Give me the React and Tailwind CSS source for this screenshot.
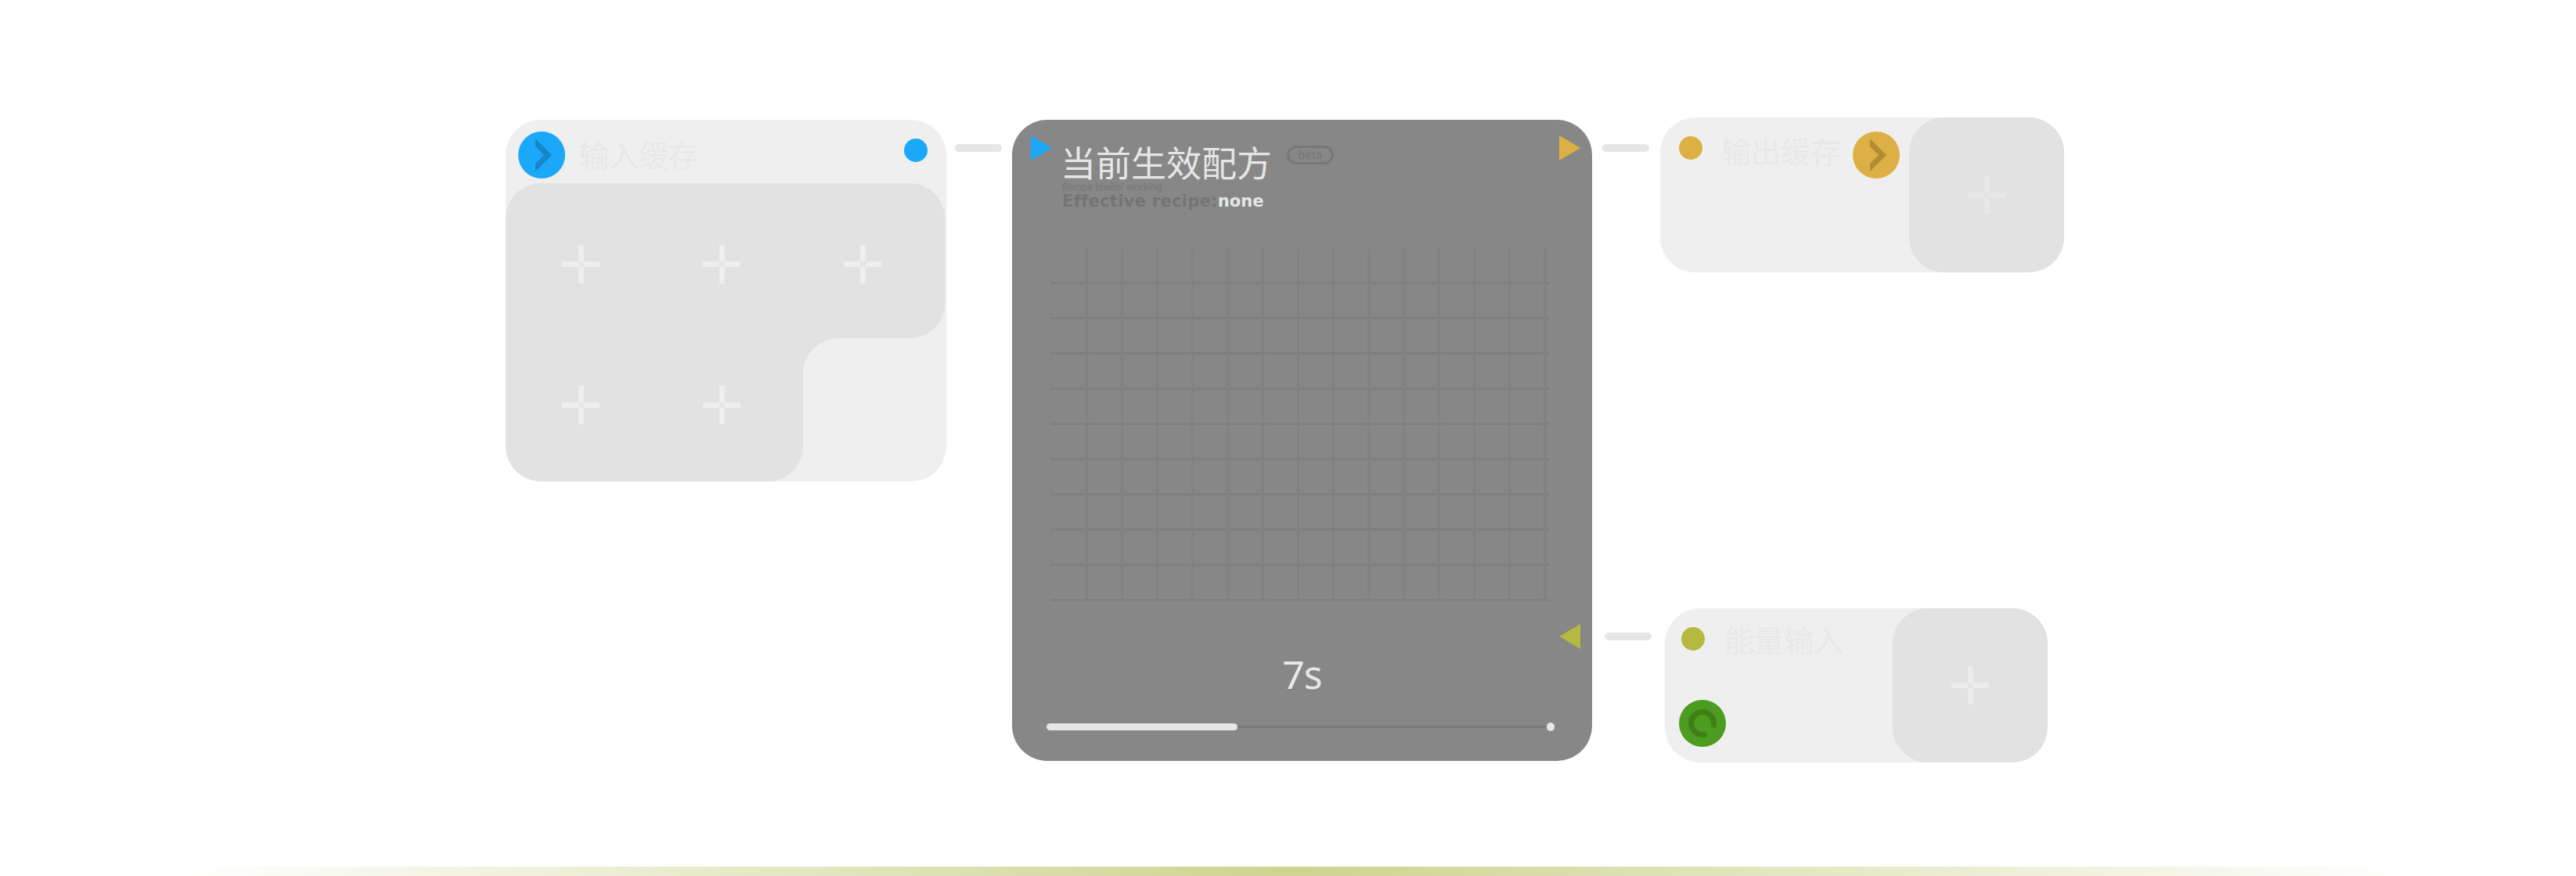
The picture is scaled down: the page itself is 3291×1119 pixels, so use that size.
import React from "react";

const cjk = { fontFamily: '"Noto Sans CJK SC", "Noto Sans", sans-serif' };

function Plus({ arm = "#eeeeee", mid = "#e6e6e6" }) {
  return (
    <svg width="48" height="49" viewBox="0 0 48 49" className="block">
      <rect x="21" y="0" width="7" height="49" fill={arm} />
      <rect x="0" y="21" width="48" height="7" fill={arm} />
      <rect x="21" y="21" width="7" height="7" fill={mid} />
    </svg>
  );
}

function Chevron({ bg }) {
  return (
    <svg width="60" height="60" viewBox="0 0 60 60" className="block shrink-0">
      <circle cx="30" cy="30" r="30" fill={bg} />
      <polygon points="22,9 43,30 22,51 22,41 33,30 22,19" fill="#000" fillOpacity="0.2" />
    </svg>
  );
}

function Spinner() {
  return (
    <svg width="60" height="60" viewBox="0 0 60 60" className="block shrink-0">
      <circle cx="30" cy="30" r="30" fill="#4c9c1f" />
      <path d="M43.6 35 A14.5 14.5 0 1 0 35 43.6" fill="none" stroke="#3e7f18" strokeWidth="7" />
    </svg>
  );
}

function Triangle({ color, left }) {
  return (
    <svg width="27" height="32" viewBox="0 0 27 32" className="block">
      <polygon points={left ? "27,0 0,16 27,32" : "0,0 27,16 0,32"} fill={color} />
    </svg>
  );
}

function Cell({ className }) {
  return (
    <div className={`w-[180px] flex items-center justify-center ${className}`}>
      <Plus />
    </div>
  );
}

function Connector({ className }) {
  return <div className={`w-[60px] h-[10px] rounded-[5px] bg-[#e6e6e6] shrink-0 ${className}`} />;
}

const Title = ({ children, className }) => (
  <div style={cjk} className={`text-[38px] leading-none text-[#e8e8e8] whitespace-nowrap ${className}`}>
    {children}
  </div>
);

function RecipeGrid() {
  const rows = Array.from({ length: 10 });
  const cols = Array.from({ length: 14 });
  return (
    <div className="w-[639px] border-t-2 border-l-2 border-[#848484]">
      {rows.map((_, r) => (
        <div key={r} className="flex pl-[2px] h-[45px] border-b-[3px] border-[#7f7f7f] box-border">
          {cols.map((_, c) => (
            <div key={c} className="w-[45px] h-[45px] border-r-[3px] border-[#818181] box-border shrink-0" />
          ))}
        </div>
      ))}
    </div>
  );
}

export default function App() {
  return (
    <div className="w-[3291px] h-[1119px] bg-white flex flex-col overflow-hidden">
      <div className="flex items-start pl-[646px] pt-[150px]">
        {/* input */}
        <div className="w-[563px] h-[462px] mt-[3px] rounded-[45px] bg-[#efefef] shrink-0 overflow-hidden">
          <div className="h-[81px] flex items-start">
            <div className="ml-[16px] mt-[15px]"><Chevron bg="#1ba8f8" /></div>
            <Title className="ml-[18px] mt-[25px]">输入缓存</Title>
            <div className="ml-auto mr-[24px] mt-[24px] w-[30px] h-[30px] rounded-full bg-[#1ba8f8]" />
          </div>
          <div className="w-[561px]">
            <div className="h-[198px] bg-[#e2e2e2] rounded-t-[45px] rounded-br-[45px] flex pl-[6px] pt-[13px]">
              <Cell className="h-[180px]" />
              <Cell className="h-[180px]" />
              <Cell className="h-[180px]" />
            </div>
            <div className="flex items-start">
              <div className="w-[380px] h-[183px] bg-[#e2e2e2] rounded-b-[45px] flex pl-[6px]">
                <Cell className="h-[170px]" />
                <Cell className="h-[170px]" />
              </div>
              <div className="w-[45px] h-[45px] bg-[#e2e2e2]">
                <div className="w-full h-full bg-[#efefef] rounded-tl-[45px]" />
              </div>
            </div>
          </div>
        </div>

        <Connector className="ml-[11px] mt-[34px]" />

        {/* center */}
        <div className="relative ml-[13px] mt-[3px] w-[741px] h-[819px] rounded-[45px] bg-[#878787] shrink-0">
          <div className="absolute left-[24px] top-[20px]"><Triangle color="#1ba8f8" /></div>
          <div className="absolute right-[15px] top-[20px]"><Triangle color="#dcb044" /></div>
          <div className="absolute right-[15px] top-[644px]"><Triangle color="#b5b93f" left /></div>

          <div className="pl-[62px] pt-[29px]">
            <div className="flex items-start h-[50px]">
              <div style={cjk} className="text-[45px] leading-[50px] font-normal text-[#e6e6e6] whitespace-nowrap">当前生效配方</div>
              <div className="ml-[19px] mt-[4px] w-[60px] h-[24px] rounded-full border-[3px] border-[#787878] flex items-center justify-center text-[15px] leading-none text-[#787878] font-['Roboto',sans-serif] tracking-wide">beta</div>
            </div>
            <div className="ml-[2px] text-[13px] leading-[14px] text-[#777777] whitespace-nowrap font-['Roboto',sans-serif]">Recipe loader working</div>
            <div className="ml-[2px] text-[21px] leading-[22px] font-bold text-[#747474] whitespace-nowrap font-['DejaVu_Sans',sans-serif]">
              <span className="tracking-[0.3px]">Effective recipe:</span><span className="text-[#e6e6e6]">none</span>
            </div>
          </div>

          <div className="ml-[48px] mt-[48px]"><RecipeGrid /></div>

          <div className="mt-[59px] text-center text-[50px] leading-[68px] tracking-[-1px] font-normal text-[#e8e8e8] font-['Noto_Sans',sans-serif]">7s</div>

          <div className="relative ml-[44px] mt-[29px] w-[644px] h-[9px] flex items-center">
            <div className="w-full h-[3px] bg-[#7b7b7b]" />
            <div className="absolute left-0 top-0 w-[244px] h-[9px] rounded-full bg-[#e6e6e6]" />
            <div className="absolute right-[-5px] top-[-1px] w-[10px] h-[11px] rounded-full bg-[#e6e6e6]" />
          </div>
        </div>

        {/* right */}
        <div className="flex flex-col shrink-0">
          <div className="flex items-start h-[198px]">
            <Connector className="ml-[13px] mt-[34px]" />
            <div className="ml-[14px] w-[516px] h-[198px] rounded-[45px] bg-[#efefef] flex items-start">
              <div className="ml-[24px] mt-[24px] w-[30px] h-[30px] rounded-full bg-[#dcb044] shrink-0" />
              <Title className="ml-[24px] mt-[23px]">输出缓存</Title>
              <div className="ml-[16px] mt-[18px]"><Chevron bg="#dcb044" /></div>
              <div className="ml-[12px] w-[198px] h-[198px] rounded-[45px] bg-[#e2e2e2] flex items-center justify-center shrink-0">
                <Plus arm="#e8e8e8" mid="#e4e4e4" />
              </div>
            </div>
          </div>
          <div className="flex items-start mt-[429px] h-[197px]">
            <Connector className="ml-[16px] mt-[31px]" />
            <div className="ml-[17px] w-[489px] h-[197px] rounded-[45px] bg-[#efefef] flex items-start">
              <div className="w-[291px] shrink-0">
                <div className="flex items-start">
                  <div className="ml-[21px] mt-[24px] w-[30px] h-[30px] rounded-full bg-[#b5b93f] shrink-0" />
                  <Title className="ml-[25px] mt-[20px]">能量输入</Title>
                </div>
                <div className="ml-[18px] mt-[59px]"><Spinner /></div>
              </div>
              <div className="w-[198px] h-[197px] rounded-[45px] bg-[#e2e2e2] flex items-center justify-center">
                <Plus arm="#ececec" mid="#e4e4e4" />
              </div>
            </div>
          </div>
        </div>
      </div>

      <div className="mt-auto ml-[231px] w-[2840px] h-[12px] bg-gradient-to-r from-transparent via-[#cfd38f] to-transparent" />
    </div>
  );
}
